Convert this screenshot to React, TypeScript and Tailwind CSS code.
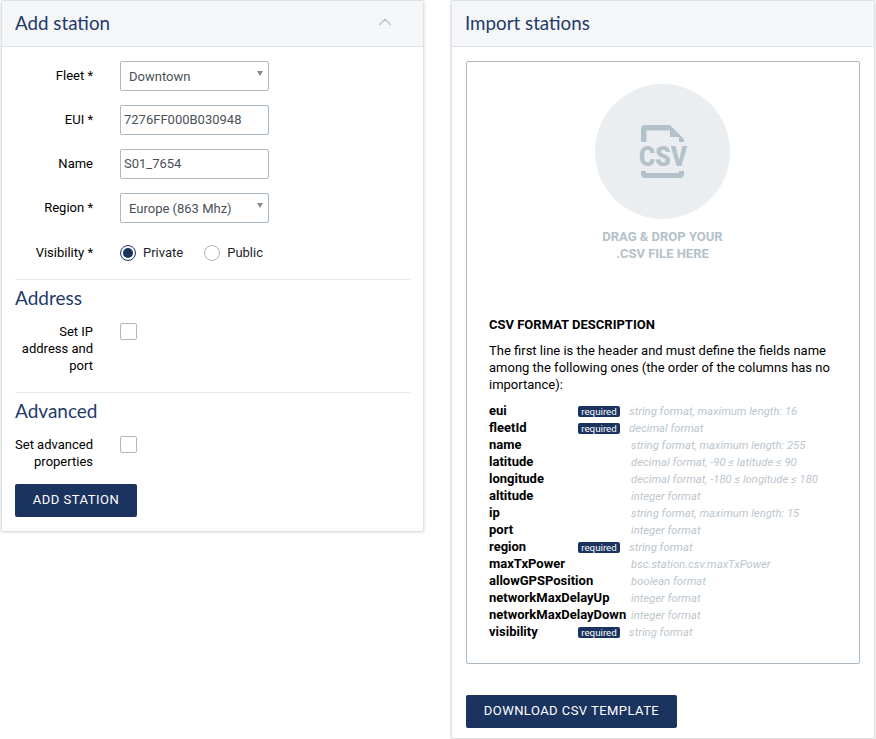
import { ChevronUp } from 'lucide-react'

const fields = [
  { name: 'eui', required: true, desc: 'string format, maximum length: 16' },
  { name: 'fleetId', required: true, desc: 'decimal format' },
  { name: 'name', desc: 'string format, maximum length: 255' },
  { name: 'latitude', desc: 'decimal format, -90 ≤ latitude ≤ 90' },
  { name: 'longitude', desc: 'decimal format, -180 ≤ longitude ≤ 180' },
  { name: 'altitude', desc: 'integer format' },
  { name: 'ip', desc: 'string format, maximum length: 15' },
  { name: 'port', desc: 'integer format' },
  { name: 'region', required: true, desc: 'string format' },
  { name: 'maxTxPower', desc: 'bsc.station.csv.maxTxPower' },
  { name: 'allowGPSPosition', desc: 'boolean format' },
  { name: 'networkMaxDelayUp', desc: 'integer format' },
  { name: 'networkMaxDelayDown', desc: 'integer format' },
  { name: 'visibility', required: true, desc: 'string format' },
]

function CardHeader({ title, collapsible }: { title: string; collapsible?: boolean }) {
  return (
    <div className="h-[46px] flex items-center justify-between pl-[13px] pr-[27px] bg-[#f4f6f8] border-b border-[#dee2e6]">
      <h2 className="font-['Lato',sans-serif] text-[18.75px] text-[#1f3a6b]">{title}</h2>
      {collapsible && <ChevronUp className="w-[22px] h-[22px] text-[#b4c0c8] -mt-1" strokeWidth={1.2} />}
    </div>
  )
}

function Label({ children, className }: { children: React.ReactNode; className?: string }) {
  return <div className={`w-[78px] shrink-0 text-right text-[13px] leading-[17px] text-black ${className ?? ''}`}>{children}</div>
}

function SelectBox({ value }: { value: string }) {
  return (
    <div className="relative w-[149px] h-[30px] pl-2 pt-[6px] border border-[#adb9c2] rounded-[2px] text-[13px] leading-[17px] text-[#495057]">
      {value}
      <span className="absolute right-[5px] top-[9px] w-0 h-0 border-x-[3.5px] border-x-transparent border-t-[5px] border-t-[#888888]" />
    </div>
  )
}

function TextBox({ value }: { value: string }) {
  return (
    <div className="w-[149px] h-[30px] pl-[3px] pt-[5px] border border-[#adb9c2] rounded-[2px] text-[13px] leading-[17px] text-[#495057]">
      {value}
    </div>
  )
}

function Checkbox() {
  return <div className="w-[17px] h-[17px] border border-[#adb9c2] rounded-[2px] bg-white" />
}

function FormRow({ label, children }: { label: string; children: React.ReactNode }) {
  return (
    <div className="flex h-[30px] mb-[14px]">
      <Label className="pt-[6px]">{label}</Label>
      <div className="ml-[27px]">{children}</div>
    </div>
  )
}

function Section({ title }: { title: string }) {
  return (
    <div className="border-t border-[#e9ecef] mt-[18px] pt-[6px]">
      <h3 className="font-['Lato',sans-serif] text-[19px] leading-[24px] text-[#1f3a6b]">{title}</h3>
    </div>
  )
}

function CsvIcon() {
  return (
    <svg viewBox="0 0 135 135" className="w-[135px] h-[135px]">
      <circle cx="67.5" cy="67.5" r="67.5" fill="#ebeef1" />
      <path d="M46 58V45a4 4 0 0 1 4-4h25l14 14v3h-5v-5H75V46.5H51.5V58z" fill="#b4c1c9" />
      <text
        x="44"
        y="82"
        textLength="48"
        lengthAdjust="spacingAndGlyphs"
        fontFamily="Roboto, sans-serif"
        fontWeight="900"
        fontSize="27"
        fill="#b4c1c9"
      >
        CSV
      </text>
      <path d="M46 87h5v2h33v-2h5v3a4 4 0 0 1-4 4H50a4 4 0 0 1-4-4z" fill="#b4c1c9" />
    </svg>
  )
}

export default function App() {
  return (
    <div className="flex items-start w-[876px] h-[739px] bg-white font-['Roboto',sans-serif] overflow-hidden">
      <div className="ml-px w-[423px] h-[531px] shrink-0 bg-white border-x border-t border-[#dee2e6] shadow-[0_1px_3px_rgba(0,0,0,0.2)] rounded-[2px]">
        <CardHeader title="Add station" collapsible />
        <div className="px-[13px] pt-[14px]">
          <FormRow label="Fleet *"><SelectBox value="Downtown" /></FormRow>
          <FormRow label="EUI *"><TextBox value="7276FF000B030948" /></FormRow>
          <FormRow label="Name"><TextBox value="S01_7654" /></FormRow>
          <FormRow label="Region *"><SelectBox value="Europe (863 Mhz)" /></FormRow>
          <div className="flex items-center h-[17px] mt-[21px]">
            <Label>Visibility *</Label>
            <div className="ml-[27px] flex items-center text-[13px] text-[#212529]">
              <span className="w-4 h-4 rounded-full border border-[#1a335f] flex items-center justify-center">
                <span className="w-[10px] h-[10px] rounded-full bg-[#1a335f]" />
              </span>
              <span className="ml-[7px]">Private</span>
              <span className="ml-[21px] w-4 h-4 rounded-full border border-[#adb9c2]" />
              <span className="ml-[7px]">Public</span>
            </div>
          </div>
          <Section title="Address" />
          <div className="flex mt-[13px]">
            <Label>Set IP address and port</Label>
            <div className="ml-[27px]"><Checkbox /></div>
          </div>
          <Section title="Advanced" />
          <div className="flex mt-[13px]">
            <Label>Set advanced properties</Label>
            <div className="ml-[27px]"><Checkbox /></div>
          </div>
          <button className="mt-[14px] w-[122px] h-[33px] pb-px bg-[#1a335f] text-white text-[13px] tracking-[0.5px] rounded-[2px]">ADD STATION</button>
        </div>
      </div>

      <div className="ml-[27px] w-[424px] h-[738px] shrink-0 bg-white border-x border-t border-[#dee2e6] shadow-[0_1px_3px_rgba(0,0,0,0.2)] rounded-[2px]">
        <CardHeader title="Import stations" />
        <div className="px-[14px] pt-[14px]">
          <div className="h-[603px] border border-[#adb9c2] rounded-[2px] pt-[22px]">
            <div className="flex flex-col items-center pr-px">
              <CsvIcon />
              <p className="mt-[9px] text-center text-[13px] leading-[17px] font-bold text-[#b4c1c9]">
                DRAG &amp; DROP YOUR<br />.CSV FILE HERE
              </p>
            </div>
            <div className="mt-[54px] pl-[22px] pr-[20px] text-[13px] leading-[17px] text-black">
              <h4 className="font-bold">CSV FORMAT DESCRIPTION</h4>
              <p className="mt-[9px]">The first line is the header and must define the fields name among the following ones (the order of the columns has no importance):</p>
              <div className="mt-[9px]">
                {fields.map((f) => (
                  <div key={f.name} className="flex items-center h-[17px]">
                    {f.required ? (
                      <>
                        <span className="w-[89px] font-bold">{f.name}</span>
                        <span className="w-[42px] h-[11px] mt-px flex items-center justify-center bg-[#1a335f] text-white text-[9.75px] rounded-[2px]">required</span>
                        <span className="ml-[9px] mt-px italic text-[11.3px] text-[#bcc6cd]">{f.desc}</span>
                      </>
                    ) : (
                      <>
                        <span className="w-[142px] font-bold">{f.name}</span>
                        <span className="mt-px italic text-[11.3px] text-[#bcc6cd]">{f.desc}</span>
                      </>
                    )}
                  </div>
                ))}
              </div>
            </div>
          </div>
          <button className="mt-[31px] w-[211px] h-[33px] pb-px bg-[#1a335f] text-white text-[13px] tracking-[0.45px] rounded-[2px]">DOWNLOAD CSV TEMPLATE</button>
        </div>
      </div>
    </div>
  )
}
